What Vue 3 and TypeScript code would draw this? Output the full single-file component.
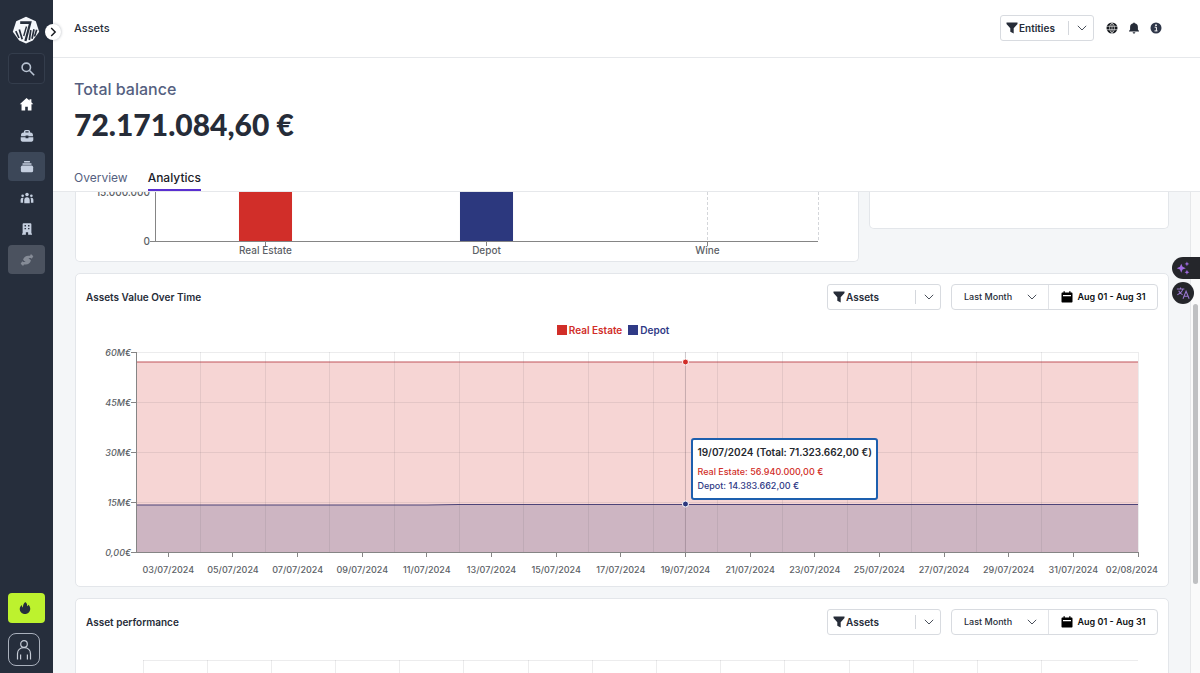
<script setup lang="ts">
interface NavItem {
  id: string
  label: string
  state?: 'active' | 'muted'
}
interface Tick {
  label: string
  day: number
}
interface Category {
  name: string
  color: string
  filled: boolean
}

const nav: NavItem[] = [
  { id: 'home', label: 'Home' },
  { id: 'case', label: 'Portfolio' },
  { id: 'assets', label: 'Assets', state: 'active' },
  { id: 'people', label: 'People' },
  { id: 'building', label: 'Companies' },
  { id: 'link', label: 'Connections', state: 'muted' },
]

const categories: Category[] = [
  { name: 'Real Estate', color: '#d12e29', filled: true },
  { name: 'Depot', color: '#2c387e', filled: true },
  { name: 'Wine', color: '#7b1f3a', filled: false },
]

const lastDay = 31
const pct = (day: number): string => `${(day / lastDay) * 100}%`
const gridDays: number[] = [2, 4, 6, 8, 10, 12, 14, 16, 18, 20, 22, 24, 26, 28, 31]
const ticks: Tick[] = Array.from({ length: 15 }, (_, i) => {
  const day = i * 2 + 1
  return { day, label: `${String(day + 2).padStart(2, '0')}/07/2024` }
})
const yTicks: string[] = ['60M€', '45M€', '30M€', '15M€', '0,00€']
const hoverDay = 17
</script>

<template>
  <div class="app">
    <aside class="sidebar">
      <svg class="logo" viewBox="0 0 28 28" aria-label="Logo">
        <path d="M14 .800 23.800 5.200 27.200 15.700 20.800 24.600 14 27.400 7.200 24.600.800 15.700 4.200 5.200Z" fill="#f4f7fb" />
        <path d="M8.200 5.300h11.600l-5.300 20-2.200-.6L16.800 8H8.200Z" fill="#262e3c" />
        <path d="M3.800 15.200 7 22M7.300 13.500l2.900 9.700M18.800 14.200 17.300 24M22 13.300l-2 9.500M24.700 13.800l-2.200 6.800" fill="none" stroke="#262e3c" stroke-width="1.700" />
        <path d="M14.500 10.500 11.700 20" fill="none" stroke="#262e3c" stroke-width="1.400" />
      </svg>
      <button class="side-btn search" aria-label="Search">
        <svg viewBox="0 0 16 16"><circle cx="6.300" cy="6.300" r="4.200" /><path d="m9.500 9.500 4.700 4.700" /></svg>
      </button>
      <nav class="nav" aria-label="Main">
        <a v-for="n in nav" :key="n.id" href="#" class="side-btn" :class="n.state" :aria-label="n.label">
          <svg v-if="n.id === 'home'" class="white" viewBox="0 0 16 16"><path d="M8 1 .800 7.600h1.900v6.900h3.900v-4h2.800v4h3.900V7.600h1.900l-2-1.900V2.300h-2v1.500Z" /></svg>
          <svg v-else-if="n.id === 'case'" viewBox="0 0 16 16"><path fill-rule="evenodd" d="M4.500 4V3c0-1.200.8-2 2-2h3c1.200 0 2 .8 2 2v1H12c1.800 0 2.800 1 2.800 2.800v1.600H9.600V7.300H6.400v1.100H1.200V6.800C1.200 5 2.200 4 4 4Zm1.700 0h3.600V2.600H6.200Z" /><path d="M.800 9.400h5.600v1.200h3.200V9.400h5.600v3c0 1.300-.8 2.100-2.100 2.100H2.900c-1.300 0-2.100-.8-2.100-2.100Z" /></svg>
          <svg v-else-if="n.id === 'assets'" viewBox="0 0 16 16"><rect x="4.500" y="1.200" width="7" height="1.600" rx=".7" /><rect x="2.700" y="3.800" width="10.600" height="1.600" rx=".7" /><rect x="1" y="6.400" width="14" height="7.600" rx="1.800" /></svg>
          <svg v-else-if="n.id === 'people'" viewBox="0 0 16 16"><circle cx="8" cy="4" r="2" /><circle cx="3" cy="5.400" r="1.500" /><circle cx="13" cy="5.400" r="1.500" /><path d="M4.900 14v-3.500C4.900 8.300 6 7 8 7s3.100 1.300 3.100 3.500V14ZM.700 13.300v-3c0-1.500.9-2.500 2.300-2.500.4 0 .7.100 1 .2-.4.700-.5 1.400-.5 2.300v3ZM15.300 13.300v-3c0-1.500-.9-2.500-2.300-2.500-.4 0-.7.100-1 .2.4.700.5 1.400.5 2.300v3Z" /></svg>
          <svg v-else-if="n.id === 'building'" viewBox="0 0 16 16"><path fill-rule="evenodd" d="M4 1.500h8c.600 0 1 .400 1 1v10.700h.700v1.500H9.300v-3H6.700v3H2.300v-1.500H3V2.500c0-.600.400-1 1-1Zm1.200 2v1.600h1.600V3.500Zm4 0v1.600h1.600V3.500Zm-4 3.300v1.600h1.600V6.800Zm4 0v1.600h1.600V6.800Z" /></svg>
          <svg v-else viewBox="0 0 16 16"><path d="M3.500 7.500C4.500 4.500 6.500 3 9.500 3h2l1-1.800 2.700 2.500-1.700 3-1.200-.9-2.500.3 1.300 1.900-2.300 2.200-2-2.400-1.900 1.700ZM12.500 8.500c-1 3-3 4.500-6 4.500h-2l-1 1.800-2.700-2.500 1.700-3 1.200.9 2.500-.3L5 8l2.200-1.600 2 2.100 1.900-1.700Z" /></svg>
        </a>
      </nav>
      <div class="side-foot">
        <button class="flame" aria-label="Highlights">
          <svg viewBox="0 0 16 16"><path d="M8.200 1c2.200 1.700 2.500 3.100 2.200 4.900.8-.3 1.200-.9 1.300-1.700 1.500 1.200 2.300 2.800 2.300 4.700 0 3.500-2.600 6-6 6s-6-2.400-6-5.700c0-2.100 1-3.700 2.400-4.700 0 1.500.4 2.400 1.300 2.800C5.500 4.700 6.400 2.600 8.200 1Z" /></svg>
        </button>
        <button class="user" aria-label="Account">
          <svg viewBox="0 0 20 22"><circle cx="10" cy="5" r="3.300" /><path d="M3.500 20.500v-5.700c0-3.300 2.400-6.100 6.500-6.100s6.500 2.800 6.500 6.100v5.700M6.600 20.500v-5M13.400 20.500v-5" /></svg>
        </button>
      </div>
      <button class="expand" aria-label="Expand sidebar"><svg viewBox="0 0 10 10"><path d="m3.200 1 4 4-4 4" /></svg></button>
    </aside>

    <main class="main">
      <header class="topbar">
        <h1>Assets</h1>
        <div class="top-actions">
          <label class="filter entities">
            <svg class="funnel" viewBox="0 0 12 12"><path d="M.500.500h11v1.600L7.700 6.200v5.300L4.300 9.700V6.200L.500 2.100Z" /></svg>
            <select aria-label="Entities"><option>Entities</option></select>
            <i class="sep" />
            <svg class="chev" viewBox="0 0 10 6"><path d="m.800.800 4.200 4.200L9.200.800" /></svg>
          </label>
          <button class="icon" aria-label="Language"><svg viewBox="0 0 12 12"><circle cx="6" cy="6" r="5.500" fill="#14171c" /><path d="M.500 4.300h11M.500 7.700h11M6 .500v11M6 .700C2.800 3 2.800 9 6 11.300M6 .700C9.200 3 9.200 9 6 11.300" fill="none" stroke="#fff" stroke-width=".6" /></svg></button>
          <button class="icon" aria-label="Notifications"><svg viewBox="0 0 12 12"><path d="M6 .500c.500 0 .8.300.8.800C8.700 1.700 9.900 3 9.900 5v2.400L11 9v.6H1V9l1.100-1.600V5c0-2 1.200-3.300 3.100-3.700 0-.5.300-.8.800-.8ZM4.700 10.200h2.600c0 .8-.5 1.300-1.300 1.300s-1.300-.5-1.300-1.300Z" fill="#262c38" /></svg></button>
          <button class="icon" aria-label="Information"><svg viewBox="0 0 12 12"><circle cx="6" cy="6" r="5.500" fill="#2e3648" /><path d="M4.700 5.200h1.700v3.600M4.500 8.900h3" fill="none" stroke="#fff" stroke-width="1" /><circle cx="6" cy="3.200" r=".9" fill="#fff" /></svg></button>
        </div>
      </header>

      <section class="summary">
        <h2>Total balance</h2>
        <p class="amount">72.171.084,60 €</p>
        <nav class="tabs" aria-label="Views">
          <a href="#">Overview</a>
          <a href="#" class="current" aria-current="page">Analytics</a>
        </nav>
      </section>

      <div class="scroller">
        <div class="content">
          <div class="row">
            <section class="card bars-card">
              <svg class="bars">
                <text class="axis" x="-5" y="4" text-anchor="end">15.000.000</text>
                <text class="axis" x="-5" y="53" text-anchor="end">0</text>
                <line x1="0" x2="0" y1="0" y2="49" class="dark" />
                <line x1="83.333%" x2="83.333%" y1="0" y2="49" class="dash" />
                <line x1="100%" x2="100%" y1="0" y2="49" class="dash" />
                <svg v-for="(c, i) in categories" :key="c.name" :x="`${(i * 100) / 3}%`" width="33.333%" height="74" overflow="visible">
                  <rect v-if="c.filled" x="38%" y="0" width="24%" height="49" :fill="c.color" />
                  <line x1="50%" x2="50%" y1="49" y2="54" class="dark" />
                  <text class="axis" x="50%" y="62" text-anchor="middle">{{ c.name }}</text>
                </svg>
                <line x1="-5" x2="100%" y1="49" y2="49" class="dark" />
              </svg>
            </section>
            <section class="card side-card" />
          </div>

          <section v-for="(title, k) in ['Assets Value Over Time', 'Asset performance']" :key="title" class="card chart-card">
            <div class="card-head">
              <h3>{{ title }}</h3>
              <div class="controls">
                <label class="filter">
                  <svg class="funnel" viewBox="0 0 12 12"><path d="M.500.500h11v1.600L7.700 6.200v5.300L4.300 9.700V6.200L.500 2.100Z" /></svg>
                  <select :aria-label="`${title} filter`"><option>Assets</option></select>
                  <i class="sep" />
                  <svg class="chev" viewBox="0 0 10 6"><path d="m.800.800 4.200 4.200L9.200.800" /></svg>
                </label>
                <div class="range">
                  <label class="period">
                    <select :aria-label="`${title} period`"><option>Last Month</option></select>
                    <svg class="chev" viewBox="0 0 10 6"><path d="m.800.800 4.200 4.200L9.200.800" /></svg>
                  </label>
                  <button class="dates">
                    <svg viewBox="0 0 12 12"><path fill-rule="evenodd" d="M2.500.300h1.300v1.200h4.400V.300h1.300v1.200h.9c.7 0 1.100.4 1.100 1.100v7.800c0 .7-.4 1.100-1.100 1.100H1.600c-.7 0-1.100-.4-1.100-1.100V2.600c0-.7.400-1.100 1.100-1.100h.9ZM2 4v1.300h8V4Z" /></svg>
                    Aug 01 - Aug 31
                  </button>
                </div>
              </div>
            </div>

            <template v-if="k === 0">
              <div class="legend">
                <span class="red"><i />Real Estate</span>
                <span class="blue"><i />Depot</span>
              </div>
              <div class="plot">
                <svg class="series" viewBox="0 0 31 200" preserveAspectRatio="none">
                  <path d="M0 10H31V200H0Z" fill="#d12e29" fill-opacity=".2" />
                  <path d="M0 153H9L10 152.400H31V200H0Z" fill="#2c387e" fill-opacity=".2" />
                  <path d="M0 10H31" class="line-red" />
                  <path d="M0 153H9L10 152.400H31" class="line-blue" />
                </svg>
                <svg class="frame">
                  <line v-for="y in [0, 50, 100, 150]" :key="y" x1="0" x2="100%" :y1="y" :y2="y" class="grid" />
                  <line v-for="d in gridDays" :key="d" :x1="pct(d)" :x2="pct(d)" y1="0" y2="200" class="grid" />
                  <g v-for="(t, i) in yTicks" :key="t">
                    <line x1="-5" x2="0" :y1="i * 50" :y2="i * 50" class="dark" />
                    <text class="axis small italic" x="-5" :y="i * 50 + 4" text-anchor="end">{{ t }}</text>
                  </g>
                  <line x1="0" x2="0" y1="0" y2="200" class="dark" />
                  <line x1="0" x2="100%" y1="200" y2="200" class="dark" />
                  <g v-for="t in ticks" :key="t.day">
                    <line :x1="pct(t.day)" :x2="pct(t.day)" y1="200" y2="205" class="dark" />
                    <text class="axis small" :x="pct(t.day)" y="221" text-anchor="middle">{{ t.label }}</text>
                  </g>
                  <line x1="100%" x2="100%" y1="200" y2="205" class="dark" />
                  <svg x="100%" width="20" height="230" overflow="visible"><text class="axis small" x="20" y="221" text-anchor="end">02/08/2024</text></svg>
                  <line :x1="pct(hoverDay)" :x2="pct(hoverDay)" y1="0" y2="200" stroke="#5b4a55" stroke-opacity=".3" />
                  <circle :cx="pct(hoverDay)" cy="10" r="3" fill="#d12e29" stroke="#fff" />
                  <circle :cx="pct(hoverDay)" cy="152" r="3" fill="#2c387e" stroke="#fff" />
                </svg>
                <div class="tooltip" :style="{ left: pct(hoverDay) }">
                  <strong>19/07/2024 (Total: 71.323.662,00 €)</strong>
                  <span class="red">Real Estate: 56.940.000,00 €</span>
                  <span class="blue">Depot: 14.383.662,00 €</span>
                </div>
              </div>
            </template>
            <svg v-else class="perf">
              <line x1="0" x2="100%" y1="0" y2="0" class="grid" />
              <line x1="0" x2="0" y1="0" y2="200" class="grid" />
              <line v-for="d in gridDays" :key="d" :x1="pct(d)" :x2="pct(d)" y1="0" y2="200" class="grid" />
            </svg>
          </section>
        </div>
        <div class="track"><i class="thumb" /></div>
      </div>
    </main>

    <div class="floating">
      <button class="spark" aria-label="Assistant"><svg viewBox="0 0 16 16"><path d="M6 3 7.500 6.700 11.200 8.200 7.500 9.700 6 13.400 4.500 9.700.800 8.200 4.500 6.700ZM12.500.500l.8 2 2 .8-2 .8-.8 2-.8-2-2-.8 2-.8ZM12.500 10l.8 2 2 .8-2 .8-.8 2-.8-2-2-.8 2-.8Z" /></svg></button>
      <button class="translate" aria-label="Translate"><svg viewBox="0 0 16 16"><path d="M1 3.500h8.500M5.200 1.800v1.700M7.800 3.500C7 6.200 4.800 8.500 1.500 10M3 5.500c1 2 2.500 3.500 4.500 4.500M8 14.500l3.500-8.500 3.500 8.500M9.200 11.800h4.600" /></svg></button>
    </div>
  </div>
</template>

<style>
html,
body {
  overflow: hidden;
}
</style>

<style scoped>
* {
  box-sizing: border-box;
}
.app {
  position: relative;
  display: flex;
  height: 100vh;
  font-family: Inter, 'Liberation Sans', sans-serif;
  color: #262c38;
  background: #fff;
}
h1,
h2,
h3,
p {
  margin: 0;
}
a {
  text-decoration: none;
}
button {
  padding: 0;
  border: 0;
  background: none;
  font: inherit;
  color: inherit;
}
svg {
  display: block;
  flex: none;
}
.sidebar {
  position: relative;
  z-index: 3;
  flex: none;
  width: 53px;
  padding: 16px 8px 7px;
  display: flex;
  flex-direction: column;
  background: #262e3c;
}
.logo {
  width: 28px;
  height: 28px;
  margin-left: 4px;
}
.side-btn {
  display: flex;
  align-items: center;
  justify-content: center;
  width: 37px;
  height: 29px;
  border-radius: 4px;
}
.side-btn svg {
  width: 14px;
  height: 14px;
  fill: #c5cfdf;
}
.side-btn .white {
  width: 15px;
  height: 15px;
  fill: #fff;
}
.search {
  height: 31px;
  margin-top: 9px;
  padding-left: 3px;
  border: 1px solid #343d4c;
  background: #242b39;
}
.side-btn.search svg {
  width: 16px;
  height: 16px;
  fill: none;
  stroke: #b9c3d2;
  stroke-width: 1.600;
}
.nav {
  display: flex;
  flex-direction: column;
  gap: 2px;
  margin-top: 6px;
}
.active {
  background: #3c4758;
}
.muted {
  background: #4b525f;
}
.side-btn.muted svg {
  fill: #858b96;
}
.side-foot {
  margin-top: auto;
}
.flame {
  display: flex;
  align-items: center;
  justify-content: center;
  width: 37px;
  height: 30px;
  padding-right: 4px;
  border-radius: 4px;
  background: #bdf22e;
}
.flame svg {
  width: 14px;
  height: 14px;
  fill: #262e3c;
}
.user {
  display: flex;
  align-items: center;
  justify-content: center;
  width: 32px;
  height: 33px;
  margin-top: 10px;
  border: 1px solid #a9b0bc;
  border-radius: 8px;
}
.user svg {
  width: 20px;
  height: 22px;
  fill: none;
  stroke: #c6ccd6;
  stroke-width: 1.200;
}
.expand {
  position: absolute;
  top: 24px;
  right: -8px;
  width: 16px;
  height: 16px;
  display: flex;
  align-items: center;
  justify-content: center;
  border-radius: 50%;
  background: #fff;
  box-shadow: 0 0 3px rgb(30 40 60 / 35%);
}
.expand svg {
  width: 10px;
  height: 10px;
  fill: none;
  stroke: #14171c;
  stroke-width: 1.400;
}
.main {
  flex: 1;
  min-width: 0;
  display: flex;
  flex-direction: column;
}
.topbar {
  flex: none;
  height: 58px;
  display: flex;
  align-items: center;
  justify-content: space-between;
  padding: 0 38px 1px 21px;
  border-bottom: 1px solid #e6e8eb;
}
h1 {
  font-size: 11px;
  line-height: 16px;
  font-weight: 500;
}
.top-actions {
  display: flex;
  align-items: center;
}
.filter {
  display: flex;
  align-items: center;
  width: 114px;
  height: 26px;
  padding: 0 6px 0 5px;
  border: 1px solid #d8dbe0;
  border-radius: 3px;
  background: #fff;
}
.entities {
  width: 94px;
  margin-right: 12px;
}
.funnel {
  width: 12px;
  height: 12px;
  fill: #262c38;
}
select {
  appearance: none;
  flex: 1;
  min-width: 0;
  padding: 0 0 0 1px;
  border: 0;
  background: transparent;
  font: 600 10px/16px Inter, 'Liberation Sans', sans-serif;
  color: #262c38;
}
.sep {
  width: 1px;
  height: 14px;
  margin-right: 8px;
  background: #d4d7dc;
}
.chev {
  width: 10px;
  height: 6px;
  fill: none;
  stroke: #4a505b;
  stroke-width: 1;
}
.icon {
  width: 12px;
  height: 12px;
}
.icon + .icon {
  margin-left: 10px;
}
.icon svg {
  width: 12px;
  height: 12px;
}
.summary {
  flex: none;
  padding: 21px 21px 0;
  border-bottom: 1px solid #e6e8eb;
}
h2 {
  font-size: 16px;
  line-height: 20px;
  font-weight: 500;
  color: #555f80;
}
.amount {
  margin-top: 4px;
  font-family: Lato, 'Liberation Sans', sans-serif;
  font-size: 30px;
  line-height: 42px;
  font-weight: 900;
}
.tabs {
  display: flex;
  gap: 20px;
  margin-top: 19px;
}
.tabs a {
  height: 27px;
  font-size: 12px;
  line-height: 27px;
  color: #555f80;
}
.tabs .current {
  border-bottom: 2px solid #5a2fd0;
  color: #1b2029;
  font-weight: 500;
}
.scroller {
  flex: 1;
  min-height: 0;
  display: flex;
  overflow: hidden;
  background: #f4f6f8;
}
.content {
  flex: 1;
  min-width: 0;
  display: flex;
  flex-direction: column;
  gap: 11px;
  padding: 0 21px 0 22px;
}
.row {
  flex: none;
  display: grid;
  grid-template-columns: 784fr 300fr;
  gap: 10px;
  align-items: start;
}
.card {
  flex: none;
  border: 1px solid #e3e6ea;
  border-radius: 5px;
  background: #fff;
}
.row .card {
  border-top: 0;
  border-top-left-radius: 0;
  border-top-right-radius: 0;
}
.bars-card {
  height: 70px;
  padding: 0 40px 0 79px;
}
.side-card {
  height: 37px;
}
.bars {
  width: 100%;
  height: 69px;
  overflow: visible;
}
.axis {
  font-size: 10px;
  font-weight: 500;
  fill: #5c5f66;
}
.small {
  font-size: 9px;
}
.italic {
  font-style: italic;
}
.dark {
  stroke: #858585;
  shape-rendering: crispEdges;
}
.dash {
  stroke: #d4d6da;
  stroke-dasharray: 3 2;
  shape-rendering: crispEdges;
}
.grid {
  stroke: #50505a;
  stroke-opacity: 0.110;
  shape-rendering: crispEdges;
}
.chart-card {
  padding: 10px;
}
.card-head {
  display: flex;
  align-items: center;
  justify-content: space-between;
  height: 25px;
}
h3 {
  font-size: 10px;
  line-height: 16px;
  font-weight: 600;
}
.controls {
  display: flex;
  gap: 10px;
}
.range {
  display: flex;
  width: 207px;
  height: 26px;
  border: 1px solid #d8dbe0;
  border-radius: 4px;
}
.period {
  display: flex;
  align-items: center;
  width: 97px;
  padding: 0 11px;
  border-right: 1px solid #e1e3e7;
}
.period select {
  font-size: 9px;
  font-weight: 500;
}
.dates {
  flex: 1;
  display: flex;
  align-items: center;
  justify-content: center;
  gap: 5px;
  font-size: 9px;
  font-weight: 600;
  color: #0d0f13;
}
.dates svg {
  width: 12px;
  height: 12px;
  fill: #000;
}
.legend {
  display: flex;
  justify-content: center;
  gap: 6px;
  margin: 13px 18px 0 0;
  font-size: 10px;
  line-height: 16px;
  font-weight: 600;
}
.legend span {
  display: flex;
  align-items: center;
  gap: 2px;
}
.legend i {
  width: 10px;
  height: 10px;
  background: currentColor;
}
.red {
  color: #d12e29;
}
.blue {
  color: #2f3a86;
}
.plot {
  position: relative;
  height: 224px;
  margin: 14px 20px 0 50px;
}
.series,
.frame {
  position: absolute;
  inset: 0;
  width: 100%;
  height: 200px;
  overflow: visible;
}
.line-red,
.line-blue {
  fill: none;
  stroke: #c0545a;
  vector-effect: non-scaling-stroke;
}
.line-blue {
  stroke: #4d4478;
}
.tooltip {
  position: absolute;
  top: 86px;
  margin-left: 6px;
  display: flex;
  flex-direction: column;
  padding: 4px 4px 5px;
  border: 2px solid #1d5fae;
  border-radius: 3px;
  background: #fff;
  font-size: 9px;
  line-height: 14px;
  font-weight: 500;
  white-space: nowrap;
}
.tooltip strong {
  margin-bottom: 5px;
  font-size: 10px;
  line-height: 16px;
  font-weight: 600;
  color: #25282e;
}
.perf {
  width: calc(100% - 77px);
  height: 200px;
  margin: 26px 20px 0 57px;
}
.track {
  flex: none;
  width: 10px;
  padding: 112px 2px 0;
  border-left: 1px solid #e6e7e9;
  background: #fafafa;
}
.thumb {
  display: block;
  height: 280px;
  border-radius: 3px;
  background: #bfc0c2;
}
.floating {
  position: absolute;
  z-index: 4;
  top: 257px;
  right: 0;
  width: 28px;
  display: flex;
  flex-direction: column;
  gap: 3px;
}
.floating button {
  display: flex;
  align-items: center;
  background: #25262b;
}
.floating svg {
  width: 14px;
  height: 14px;
}
.spark {
  height: 22px;
  padding-left: 4px;
  border-radius: 11px 0 0 11px;
}
.spark svg {
  fill: #a06be0;
}
.translate {
  width: 22px;
  height: 22px;
  justify-content: center;
  border-radius: 50%;
}
.translate svg {
  fill: none;
  stroke: #9a78d0;
  stroke-width: 1.200;
}
</style>
